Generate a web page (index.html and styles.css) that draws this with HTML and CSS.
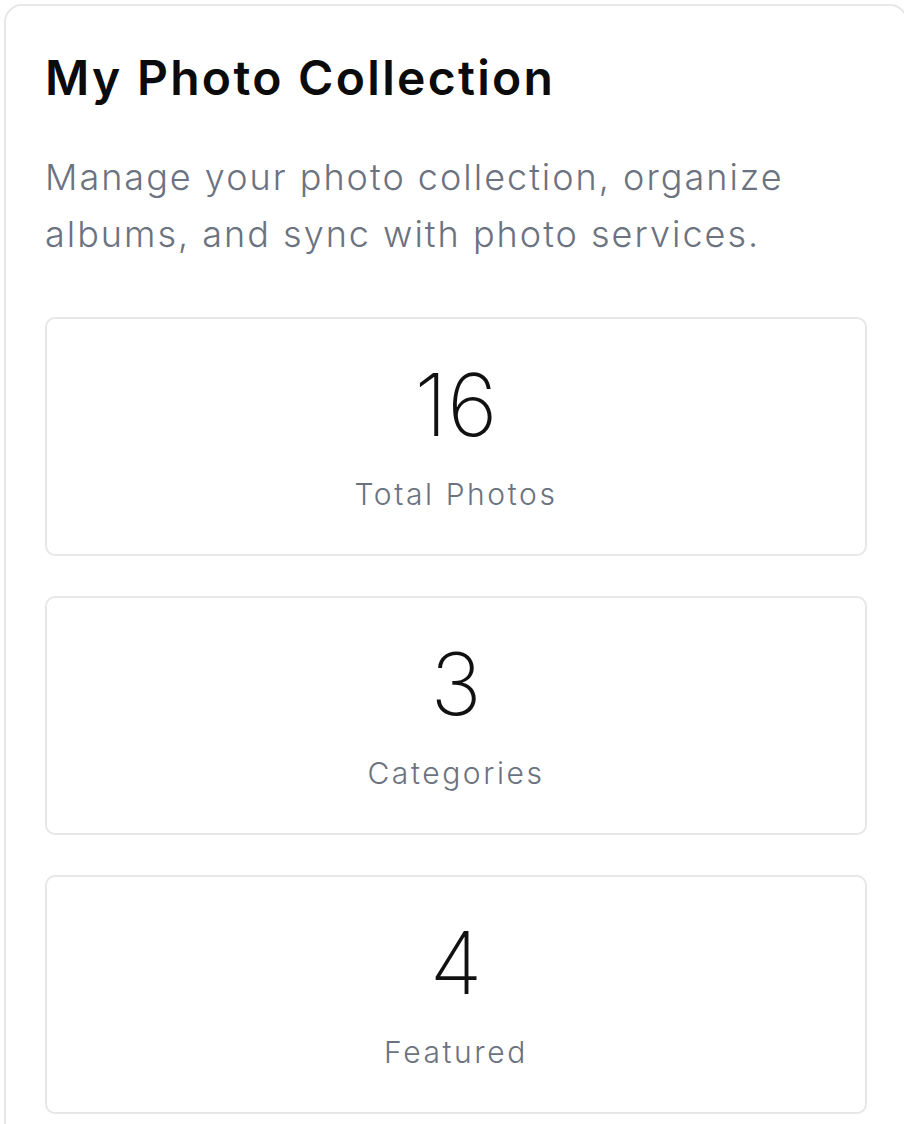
FILE: index.html
```html
<!DOCTYPE html>
<html lang="en">
<head>
<meta charset="utf-8">
<title>My Photo Collection</title>
<link rel="stylesheet" href="styles.css">
</head>
<body>
<section class="panel">
  <h1 class="panel-title">My Photo Collection</h1>
  <p class="panel-desc">Manage your photo collection, organize albums, and sync with photo services.</p>
  <div class="stats">
    <div class="stat">
      <div class="stat-value">16</div>
      <div class="stat-label">Total Photos</div>
    </div>
    <div class="stat">
      <div class="stat-value">3</div>
      <div class="stat-label">Categories</div>
    </div>
    <div class="stat">
      <div class="stat-value">4</div>
      <div class="stat-label">Featured</div>
    </div>
  </div>
</section>
</body>
</html>
```

FILE: styles.css
```css
html, body {
  margin: 0;
  padding: 0;
  overflow: hidden;
  background: #ffffff;
}

body {
  font-family: Inter, "Open Sans", sans-serif;
  padding: 4px;
  width: 904px;
  box-sizing: border-box;
}

.panel {
  box-sizing: border-box;
  width: 904px;
  border: 2px solid #e7e7e7;
  border-radius: 18px;
  padding: 40px 39px;
  background: #fff;
}

.panel-title {
  margin: 0;
  font-size: 48px;
  line-height: 64px;
  font-weight: 600;
  color: #0b0b0b;
  letter-spacing: 2.3px;
}

.panel-desc {
  margin: 39px 0 0;
  font-size: 36px;
  line-height: 57px;
  font-weight: 300;
  color: #6b7280;
  letter-spacing: 2px;
}

.stats {
  margin-top: 54px;
  display: flex;
  flex-direction: column;
  gap: 40px;
}

.stat {
  border: 2px solid #e7e7e9;
  border-radius: 10px;
  padding: 38px 20px 40px;
  display: flex;
  flex-direction: column;
  align-items: center;
}

.stat-value {
  font-size: 86px;
  line-height: 96px;
  font-weight: 200;
  color: #111111;
}

.stat-label {
  margin-top: 21px;
  font-size: 30px;
  line-height: 40px;
  font-weight: 300;
  color: #6b7280;
  letter-spacing: 2.6px;
}
```
